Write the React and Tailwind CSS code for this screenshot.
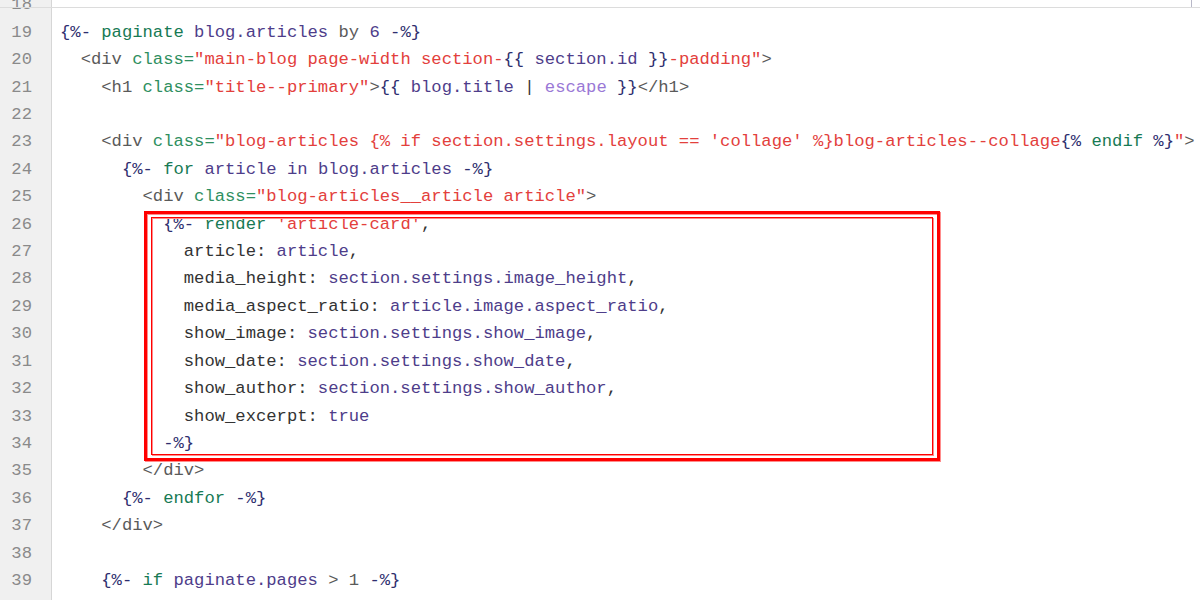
const D = 'text-[#2e2e6e]';
const K = 'text-[#177a54]';
const V = 'text-[#4e3d8a]';
const S = 'text-[#e3403c]';
const T = 'text-[#5a5a5a]';
const A = 'text-[#2f8f5f]';
const P = 'text-[#333333]';
const F = 'text-[#9a78d6]';

const lines = [
  [18, []],
  [19, [[D, '{%- '], [K, 'paginate'], [V, ' blog.articles'], [T, ' by '], [V, '6'], [D, ' -%}']]],
  [20, [[T, '  <div '], [A, 'class='], [S, '"main-blog page-width section-'], [D, '{{ '], [V, 'section.id'], [D, ' }}'], [S, '-padding"'], [T, '>']]],
  [21, [[T, '    <h1 '], [A, 'class='], [S, '"title--primary"'], [T, '>'], [D, '{{ '], [V, 'blog.title'], [P, ' | '], [F, 'escape'], [D, ' }}'], [T, '</h1>']]],
  [22, []],
  [23, [[T, '    <div '], [A, 'class='], [S, '"blog-articles {% if section.settings.layout == \'collage\' %}blog-articles--collage'], [D, '{% '], [K, 'endif'], [D, ' %}'], [S, '"'], [T, '>']]],
  [24, [[D, '      {%- '], [K, 'for'], [V, ' article in blog.articles'], [D, ' -%}']]],
  [25, [[T, '        <div '], [A, 'class='], [S, '"blog-articles__article article"'], [T, '>']]],
  [26, [[D, '          {%- '], [K, 'render'], [S, ' \'article-card\''], [P, ',']]],
  [27, [[P, '            article: '], [V, 'article'], [P, ',']]],
  [28, [[P, '            media_height: '], [V, 'section.settings.image_height'], [P, ',']]],
  [29, [[P, '            media_aspect_ratio: '], [V, 'article.image.aspect_ratio'], [P, ',']]],
  [30, [[P, '            show_image: '], [V, 'section.settings.show_image'], [P, ',']]],
  [31, [[P, '            show_date: '], [V, 'section.settings.show_date'], [P, ',']]],
  [32, [[P, '            show_author: '], [V, 'section.settings.show_author'], [P, ',']]],
  [33, [[P, '            show_excerpt: '], [V, 'true']]],
  [34, [[D, '          -%}']]],
  [35, [[T, '        </div>']]],
  [36, [[D, '      {%- '], [K, 'endfor'], [D, ' -%}']]],
  [37, [[T, '    </div>']]],
  [38, []],
  [39, [[D, '    {%- '], [K, 'if'], [V, ' paginate.pages'], [T, ' > 1'], [D, ' -%}']]],
];

export default function App() {
  return (
    <div
      className="relative h-[600px] w-[1200px] overflow-hidden bg-white text-[17.2px] leading-[27.4px]"
      style={{ fontFamily: '"Liberation Mono", "DejaVu Sans Mono", monospace' }}
    >
      <div className="-mt-[8.6px] flex min-h-[640px]">
        <div className="w-[52px] shrink-0 border-r border-[#d6d6d6] bg-[#f0f0f0] pr-[19px] text-right text-[#8a8a8a]">
          {lines.map(([n]) => (
            <div key={n}>{n}</div>
          ))}
        </div>
        <div className="flex-1 pl-[8px]">
          {lines.map(([n, toks]) => (
            <div key={n} className="whitespace-pre">
              {toks.length ? toks.map(([c, t], i) => (
                <span key={i} className={c}>{t}</span>
              )) : '\u00a0'}
            </div>
          ))}
        </div>
      </div>

      <div className="absolute left-0 right-0 top-[7px] h-px bg-[#dcdcdc]" />
      <div className="absolute left-[1191px] top-0 h-[7px] w-px bg-[#b8b8c8]" />

      <div className="absolute left-[144px] top-[211px] h-[250px] w-[796px] border-[3px] border-[#ff0000] px-[4px] py-[3px] drop-shadow-[1px_1px_0_#ff8c8c]">
        <div className="h-full w-full border border-[#ff0000]" />
      </div>
    </div>
  );
}
